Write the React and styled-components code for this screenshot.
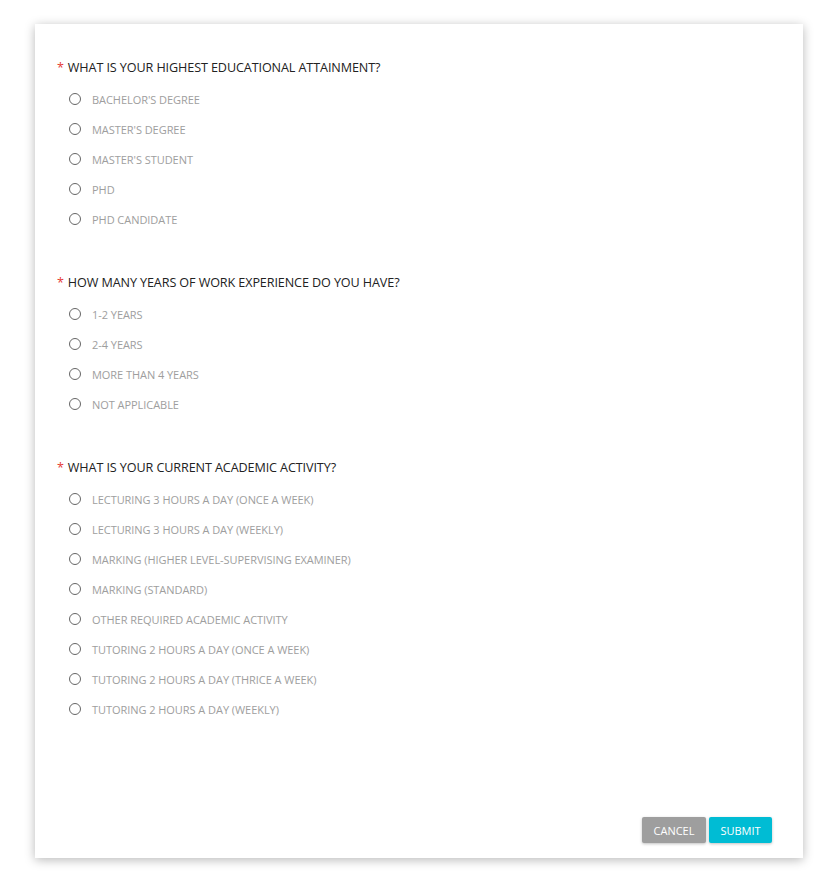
import React from "react";
import styled, { createGlobalStyle } from "styled-components";

const Global = createGlobalStyle`
  html, body { margin: 0; padding: 0; background: #fff; }
  body { font-family: "Open Sans", "Noto Sans", sans-serif; }
`;

const Page = styled.div`
  padding: 24px 33px 29px 35px;
`;

const Card = styled.form`
  width: 768px;
  height: 834px;
  box-sizing: border-box;
  background: #fff;
  box-shadow: 0 2px 10px rgba(0, 0, 0, 0.28);
  padding: 35px 31px 15px 22px;
  display: flex;
  flex-direction: column;
`;

const Group = styled.fieldset`
  border: 0;
  margin: 0 0 40px 0;
  padding: 0;
  min-width: 0;
`;

const Question = styled.legend`
  padding: 0;
  font-size: 12.6px;
  line-height: 18px;
  color: #222;
  text-transform: uppercase;
  letter-spacing: -0.1px;
`;

const Star = styled.span`
  color: #e53935;
  margin-right: 4px;
`;

const Options = styled.div`
  margin-top: 7px;
  padding-left: 12px;
  display: flex;
  flex-direction: column;
`;

const Option = styled.label`
  height: 30px;
  display: flex;
  align-items: center;
  gap: 11px;
  font-size: 11px;
  color: #9e9e9e;
  text-transform: uppercase;
  cursor: pointer;
  letter-spacing: -0.05px;
`;

const Radio = styled.input.attrs({ type: "radio" })`
  appearance: none;
  margin: 0;
  width: 12px;
  height: 12px;
  border: 1.5px solid #666;
  border-radius: 50%;
  box-sizing: border-box;
`;

const Footer = styled.div`
  margin-top: auto;
  display: flex;
  justify-content: flex-end;
  gap: 3px;
`;

const Button = styled.button`
  height: 26px;
  min-width: ${(p) => p.$w}px;
  padding: 0 10px;
  border: 0;
  border-radius: 2px;
  font-family: inherit;
  font-size: 11px;
  color: #fff;
  text-transform: uppercase;
  background: ${(p) => p.$bg};
  box-shadow: 0 1px 3px rgba(0, 0, 0, 0.25);
  cursor: pointer;
`;

const questions = [
  {
    name: "education",
    q: "What is your highest educational attainment?",
    options: ["Bachelor's Degree", "Master's Degree", "Master's Student", "PhD", "PhD Candidate"],
  },
  {
    name: "experience",
    q: "How many years of work experience do you have?",
    options: ["1-2 Years", "2-4 Years", "More than 4 years", "Not Applicable"],
  },
  {
    name: "activity",
    q: "What is your current academic activity?",
    options: [
      "Lecturing 3 hours a day (once a week)",
      "Lecturing 3 hours a day (weekly)",
      "Marking (higher level-supervising examiner)",
      "Marking (standard)",
      "Other required academic activity",
      "Tutoring 2 hours a day (once a week)",
      "Tutoring 2 hours a day (thrice a week)",
      "Tutoring 2 hours a day (weekly)",
    ],
  },
];

export default function App() {
  return (
    <>
      <Global />
      <Page>
        <Card onSubmit={(e) => e.preventDefault()}>
          {questions.map((g) => (
            <Group key={g.name}>
              <Question>
                <Star>*</Star>
                {g.q}
              </Question>
              <Options>
                {g.options.map((o) => (
                  <Option key={o}>
                    <Radio name={g.name} value={o} />
                    {o}
                  </Option>
                ))}
              </Options>
            </Group>
          ))}
          <Footer>
            <Button type="button" $bg="#9e9e9e" $w={64}>Cancel</Button>
            <Button type="submit" $bg="#00bcd4" $w={63}>Submit</Button>
          </Footer>
        </Card>
      </Page>
    </>
  );
}
